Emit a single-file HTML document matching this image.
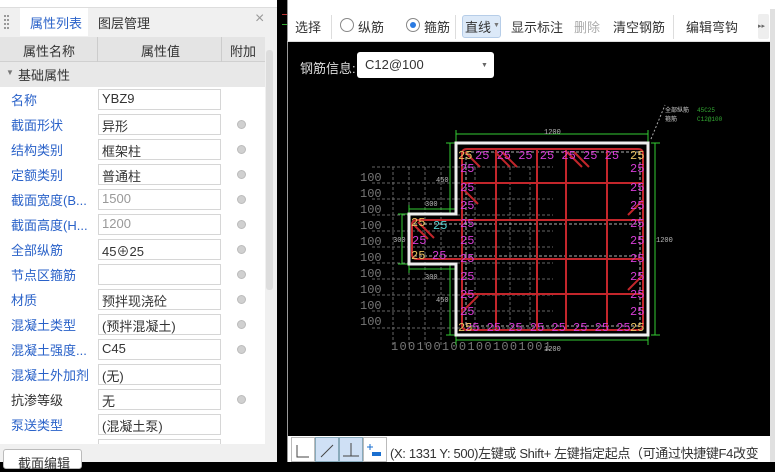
<!DOCTYPE html>
<html><head><meta charset="utf-8"><style>
*{box-sizing:border-box;margin:0;padding:0}
body{width:775px;height:462px;overflow:hidden;background:#000;font-family:"Liberation Sans","Noto Sans CJK SC",sans-serif;font-size:13px;color:#333;position:relative}
.abs{position:absolute}
#left{left:0;top:0;width:277px;height:462px;background:#f0f0f0}
.row{position:absolute;left:0;width:265px;height:25px}
.row .n{position:absolute;left:11px;top:3px;color:#2a62c9;font-size:13px;white-space:nowrap}
.row .v{position:absolute;left:98px;top:2px;width:123px;height:21px;border:1px solid #d6d6d6;background:#fff;padding:1px 3px;font-size:13px;color:#333;white-space:nowrap}
.row .c{position:absolute;left:237px;top:8px;width:9px;height:9px;border-radius:50%;background:#d0d0d0;border:1px solid #bbb}
.tb{position:absolute;top:17px;font-size:13px;color:#333}
</style></head><body>
<div id="left" class="abs">
 <div class="abs" style="left:0;top:0;width:277px;height:8px;background:#fff;border-bottom:1px solid #ddd"></div>
 <div class="abs" style="left:0;top:8px;width:277px;height:29px;background:#f0f0f0"></div>
 <div class="abs" style="left:4px;top:15px;width:5px;height:14px;border-left:2px dotted #999;border-right:2px dotted #999"></div>
 <div class="abs" style="left:20px;top:8px;width:68px;height:28px;background:#fff;color:#2a62c9;padding:5px 0 0 10px">属性列表</div>
 <div class="abs" style="left:98px;top:13px;color:#333">图层管理</div>
 <div class="abs" style="left:255px;top:10px;color:#999;font-size:16px">×</div>
 <div class="abs" style="left:0;top:37px;width:265px;height:25px;background:#e4e4e4;border-bottom:1px solid #d0d0d0"></div>
 <div class="abs" style="left:97px;top:37px;width:1px;height:25px;background:#ccc"></div>
 <div class="abs" style="left:221px;top:37px;width:1px;height:25px;background:#ccc"></div>
 <div class="abs" style="left:23px;top:41px">属性名称</div>
 <div class="abs" style="left:141px;top:41px">属性值</div>
 <div class="abs" style="left:230px;top:41px">附加</div>
 <div class="abs" style="left:0;top:62px;width:265px;height:25px;background:#e8e8e8"></div>
 <div class="abs" style="left:6px;top:68px;font-size:8px;color:#777">▼</div>
 <div class="abs" style="left:18px;top:65px">基础属性</div>
 <div class="abs" style="left:0;top:87px;width:265px;height:357px;background:#fff"></div>
 <div class="abs" style="left:266px;top:50px;width:7px;height:240px;background:#ddd;border-radius:3px"></div>
 <div class="abs" style="left:0;top:444px;width:277px;height:18px;background:#f0f0f0"></div>
 <div class="abs" style="left:3px;top:449px;width:79px;height:20px;border:1px solid #bbb;border-radius:3px;background:#fff;padding:3px 0 0 14px">截面编辑</div>
</div>
<div class="row" style="top:87px"><span class="n">名称</span><span class="v">YBZ9</span></div>
<div class="row" style="top:112px"><span class="n">截面形状</span><span class="v">异形</span><span class="c"></span></div>
<div class="row" style="top:137px"><span class="n">结构类别</span><span class="v">框架柱</span><span class="c"></span></div>
<div class="row" style="top:162px"><span class="n">定额类别</span><span class="v">普通柱</span><span class="c"></span></div>
<div class="row" style="top:187px"><span class="n">截面宽度(B...</span><span class="v" style="color:#999">1500</span><span class="c"></span></div>
<div class="row" style="top:212px"><span class="n">截面高度(H...</span><span class="v" style="color:#999">1200</span><span class="c"></span></div>
<div class="row" style="top:237px"><span class="n">全部纵筋</span><span class="v">45⊕25</span><span class="c"></span></div>
<div class="row" style="top:262px"><span class="n">节点区箍筋</span><span class="v"></span><span class="c"></span></div>
<div class="row" style="top:287px"><span class="n">材质</span><span class="v">预拌现浇砼</span><span class="c"></span></div>
<div class="row" style="top:312px"><span class="n">混凝土类型</span><span class="v">(预拌混凝土)</span><span class="c"></span></div>
<div class="row" style="top:337px"><span class="n">混凝土强度...</span><span class="v">C45</span><span class="c"></span></div>
<div class="row" style="top:362px"><span class="n">混凝土外加剂</span><span class="v">(无)</span></div>
<div class="row" style="top:387px"><span class="n" style="color:#333">抗渗等级</span><span class="v">无</span><span class="c"></span></div>
<div class="row" style="top:412px"><span class="n">泵送类型</span><span class="v">(混凝土泵)</span></div>
<div class="abs" style="left:98px;top:439px;width:123px;height:5px;border:1px solid #d6d6d6;border-bottom:none;background:#fff"></div>

<div class="abs" style="left:287px;top:0;width:488px;height:9px;background:#fff;border-left:1px solid #999"></div>
<div class="abs" style="left:287px;top:9px;width:483px;height:33px;background:#fff;border-left:1px solid #999;border-bottom:1px solid #ddd"></div>
<div class="abs" style="left:770px;top:9px;width:5px;height:453px;background:#e0e0e0"></div>
<div class="tb" style="left:295px">选择</div>
<div class="abs" style="left:331px;top:15px;width:1px;height:24px;background:#ddd"></div>
<div class="abs" style="left:340px;top:18px;width:14px;height:14px;border:1px solid #888;border-radius:50%;background:#fff"></div>
<div class="tb" style="left:358px">纵筋</div>
<div class="abs" style="left:406px;top:18px;width:14px;height:14px;border:1px solid #888;border-radius:50%;background:#fff"></div>
<div class="abs" style="left:410px;top:22px;width:6px;height:6px;border-radius:50%;background:#2a7ae2"></div>
<div class="tb" style="left:424px">箍筋</div>
<div class="abs" style="left:455px;top:15px;width:1px;height:24px;background:#ddd"></div>
<div class="abs" style="left:462px;top:15px;width:39px;height:23px;background:#dce9f8;border:1px solid #b6cde8;border-radius:3px"></div>
<div class="tb" style="left:465px">直线</div>
<div class="abs" style="left:493px;top:22px;font-size:7px;color:#777">▼</div>
<div class="tb" style="left:511px">显示标注</div>
<div class="tb" style="left:574px;color:#aaa">删除</div>
<div class="tb" style="left:613px">清空钢筋</div>
<div class="abs" style="left:673px;top:15px;width:1px;height:24px;background:#ddd"></div>
<div class="tb" style="left:686px">编辑弯钩</div>
<div class="abs" style="left:758px;top:14px;width:11px;height:25px;background:#eee;border-radius:2px;font-size:7px;color:#666;padding-top:8px">▸▸</div>

<div class="abs" style="left:287px;top:42px;width:1px;height:394px;background:#999"></div>
<div class="abs" style="left:300px;top:58px;color:#ddd">钢筋信息:</div>
<div class="abs" style="left:357px;top:52px;width:137px;height:26px;background:#fff;border-radius:3px;padding:5px 0 0 8px;color:#333">C12@100</div>
<div class="abs" style="left:481px;top:62px;font-size:7px;color:#666">▼</div>

<div class="abs" style="left:277px;top:0;width:10px;height:462px;background:#000"></div>
<div class="abs" style="left:282px;top:14px;width:5px;height:1px;background:#b33"></div>
<div class="abs" style="left:282px;top:24px;width:5px;height:1px;background:#3a3"></div>

<svg class="abs" style="left:0;top:0" width="775" height="462">
 <g stroke="#666" stroke-width="1" stroke-dasharray="3,2" fill="none">
  <path d="M372 167H553M372 183H553M372 199H553M372 215H553M372 231H553M372 247H553M372 263H553M372 279H553M372 295H553M372 311H553M372 328H553"/>
  <path d="M393 167V345M409 167V345M425 167V345M441 167V345M475 167V330M510 167V330M530 167V330"/>
 </g>
 <g fill="#777" font-family="Liberation Mono,monospace" font-size="12">
  <text x="360" y="181">100</text><text x="360" y="197">100</text><text x="360" y="213">100</text><text x="360" y="229">100</text><text x="360" y="245">100</text><text x="360" y="261">100</text><text x="360" y="277">100</text><text x="360" y="293">100</text><text x="360" y="309">100</text><text x="360" y="325">100</text>
  <text x="391" y="350" textLength="160">1001001001001001001</text>
 </g>
 <g stroke="#3c3" stroke-width="1" fill="none">
  <path d="M456 134H648M456 130V143M648 130V143"/>
  <path d="M655 143V335M651 143H660M651 335H660"/>
  <path d="M456 340H648M456 336V345M648 336V345"/>
  <path d="M450 143V214M446 143H456M446 214H456M450 264V335M446 264H456M446 335H456"/>
  <path d="M409 209H456M409 205V214M409 269H456M409 264V273"/>
  <path d="M402 214V264M398 214H409M398 264H409"/>
 </g>
 <g fill="#bbb" font-family="Liberation Mono,monospace" font-size="7">
  <text x="544" y="134">1200</text><text x="656" y="242">1200</text><text x="544" y="351">1200</text>
  <text x="436" y="182">450</text><text x="436" y="302">450</text>
  <text x="425" y="206">300</text><text x="425" y="279">300</text><text x="393" y="242">300</text>
 </g>
 <path d="M456 143H648V335H456V264H409V214H456Z" fill="none" stroke="#eee" stroke-width="3"/>
 <g stroke="#e8e8e8" stroke-dasharray="3,2" stroke-width="0.8" fill="none">
  <path d="M466 152H640M466 326H640M466 152V326M640 152V326M414 224H640M414 256H640"/>
 </g>
 <g stroke="#c3262b" stroke-width="2" fill="none">
  <path d="M467 149H638Q643 149 643 154V325Q643 330 638 330H467Q462 330 462 325V154Q462 149 467 149Z"/>
  <path d="M496 149V330M537 149V330M566 149V330M607 149V330"/>
  <path d="M462 183H643M462 294H643"/>
  <path d="M417 220H643M417 259H643M417 220Q412 220 412 225V254Q412 259 417 259"/>
  <path d="M465 152L480 167M495 152L510 167M502 152L517 167M567 152L582 167M574 152L589 167M464 190L478 204M414 225L428 239M418 222L434 238M464 310L478 296M643 200L628 215M643 275L628 290"/>
 </g>
 <g fill="#d63cd6" font-family="Liberation Mono,monospace" font-size="12">
  <text x="475" y="159">25 25 25 25 25 25 25</text>
  <text x="465" y="331">25 25 25 25 25 25 25 25</text>
  <text x="460" y="172">25</text><text x="460" y="191">25</text><text x="460" y="209">25</text><text x="460" y="227">25</text><text x="460" y="244">25</text><text x="460" y="262">25</text><text x="460" y="280">25</text><text x="460" y="298">25</text><text x="460" y="315">25</text>
  <text x="630" y="172">25</text><text x="630" y="191">25</text><text x="630" y="209">25</text><text x="630" y="227">25</text><text x="630" y="244">25</text><text x="630" y="262">25</text><text x="630" y="280">25</text><text x="630" y="298">25</text><text x="630" y="315">25</text>
  <text x="412" y="244">25</text><text x="432" y="259">25</text>
 </g>
 <text x="433" y="229" fill="#5cc" font-family="Liberation Mono,monospace" font-size="12">25</text>
 <g fill="#e8c060" font-family="Liberation Mono,monospace" font-size="12">
  <text x="458" y="159">25</text><text x="630" y="159">25</text><text x="458" y="331">25</text><text x="630" y="331">25</text><text x="411" y="226">25</text><text x="411" y="259">25</text>
 </g>
 <path d="M651 139L665 105" stroke="#aaa" stroke-dasharray="2,2"/>
 <g font-family="Liberation Mono,monospace" font-size="6">
  <text x="665" y="112" fill="#ccc">全部纵筋</text><text x="697" y="112" fill="#3a3">45C25</text>
  <text x="665" y="121" fill="#ccc">箍筋</text><text x="697" y="121" fill="#3a3">C12@100</text>
 </g>
</svg>

<div class="abs" style="left:287px;top:436px;width:483px;height:26px;background:#fff;border-left:1px solid #999"></div>
<div class="abs" style="left:291px;top:437px;width:24px;height:25px;border:1px solid #bbb;background:#fff"></div>
<div class="abs" style="left:315px;top:437px;width:24px;height:25px;border:1px solid #8ab;background:#cfe0f5"></div>
<div class="abs" style="left:339px;top:437px;width:24px;height:25px;border:1px solid #8ab;background:#cfe0f5"></div>
<div class="abs" style="left:363px;top:437px;width:24px;height:25px;border:1px solid #bbb;background:#fff"></div>
<svg class="abs" style="left:291px;top:437px" width="96" height="25" fill="none" stroke="#444" stroke-width="1">
 <path d="M6 8V20H18"/><path d="M30 20L42 8"/><path d="M60 6V19M52 19H68"/>
 <path d="M76 10H82M79 7V13" stroke="#1a6fd0"/><rect x="81" y="15" width="9" height="4" fill="#1a6fd0" stroke="none"/>
</svg>
<div class="abs" style="left:390px;top:443px;font-size:13px;letter-spacing:-0.35px;color:#333;white-space:nowrap">(X: 1331 Y: 500)左键或 Shift+ 左键指定起点（可通过快捷键F4改变</div>
</body></html>
